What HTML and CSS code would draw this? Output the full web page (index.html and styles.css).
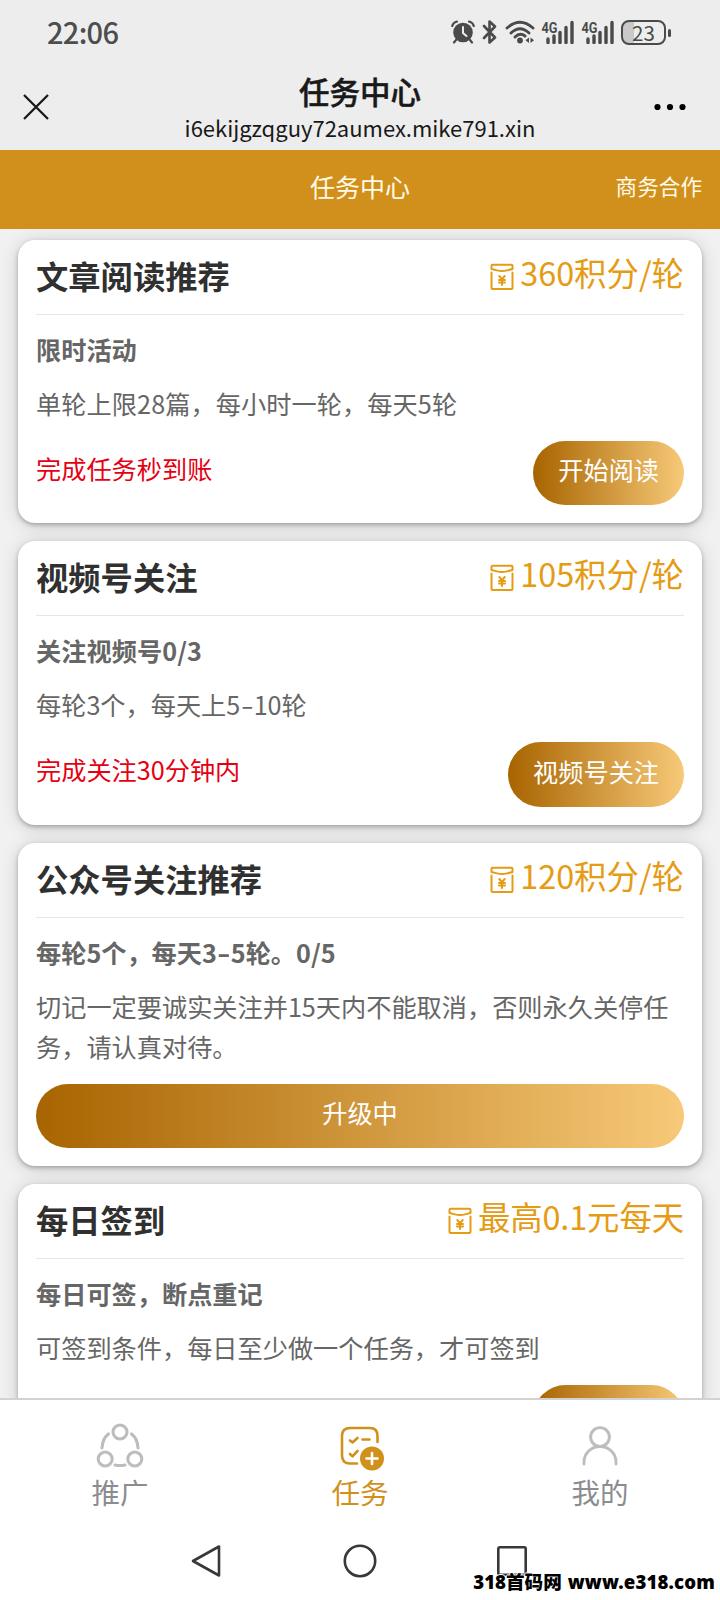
FILE: index.html
```html
<!DOCTYPE html>
<html lang="zh-CN">
<head>
<meta charset="utf-8">
<title>任务中心</title>
<link rel="stylesheet" href="styles.css">
</head>
<body>
<svg class="defs" aria-hidden="true">
  <symbol id="packet" viewBox="0 0 24 28">
    <g fill="none" stroke="currentColor" stroke-width="2" stroke-linejoin="round" stroke-linecap="round">
      <path d="M2.500 1.800H21.500Q22.500 1.800 22.500 3V6L17 7.400Q12 8.600 7 7.400L1.500 6V3Q1.500 1.800 2.500 1.800Z"/>
      <path d="M1.500 9.500V25Q1.500 26 2.500 26H21.500Q22.500 26 22.500 25V9.500"/>
      <path d="M9.300 13L12 16.300L14.700 13M12 16.500V22M9 17H15M9 19.600H15"/>
    </g>
  </symbol>
  <symbol id="signal" viewBox="0 0 34 24">
    <text class="signal-text" x="0.500" y="12.500" textLength="16" lengthAdjust="spacingAndGlyphs">4G</text>
    <path d="M7 22.500V19M13 22.500V16M19 22.500V12.500M25 22.500V7.500M31 22.500V2.500" stroke="currentColor" stroke-width="3.400" stroke-linecap="round"/>
  </symbol>
</svg>
<div class="phone">
  <header class="top">
    <div class="status">
      <span class="clock">22:06</span>
      <svg class="i-alarm" viewBox="0 0 24 24"><circle cx="12" cy="12.500" r="9.800" fill="currentColor"/><path d="M1.200 6Q2 2.500 6 1.500M18 1.500Q22 2.500 22.800 6M5 20L3 22.500M19 20L21 22.500" fill="none" stroke="currentColor" stroke-width="2.200" stroke-linecap="round"/><path d="M12 7V13L15.500 16" fill="none" stroke="#ededed" stroke-width="2" stroke-linecap="round"/></svg>
      <svg class="i-bt" viewBox="0 0 16 24"><path d="M2 6L13 17.500L7.500 22.500V1.500L13 6.500L2 18" fill="none" stroke="currentColor" stroke-width="2.600" stroke-linejoin="round" stroke-linecap="round"/></svg>
      <svg class="i-wifi" viewBox="0 0 30 24"><g fill="none" stroke="currentColor" stroke-width="2.900" stroke-linecap="round"><path d="M2 8Q15-3.500 28 8M6 13Q15 4.500 24 13M10 17Q15 12 20 16"/></g><circle cx="15" cy="20.500" r="2.900" fill="currentColor"/><path d="M24 17.500V23L20.500 20.200ZM25.500 17.500V23L29 20.200Z" fill="currentColor"/></svg>
      <svg class="i-signal"><use href="#signal"/></svg>
      <svg class="i-signal"><use href="#signal"/></svg>
      <div class="battery"><span>23</span></div>
    </div>
    <div class="titlebar">
      <svg class="close" viewBox="0 0 26 26"><path d="M1 1L25 25M25 1L1 25" stroke="#191919" stroke-width="2.300"/></svg>
      <div class="titles">
        <div class="title">任务中心</div>
        <div class="url">i6ekijgzqguy72aumex.mike791.xin</div>
      </div>
      <svg class="more" viewBox="0 0 32 8"><circle cx="3.500" cy="4" r="3.100"/><circle cx="16" cy="4" r="3.100"/><circle cx="28.500" cy="4" r="3.100"/></svg>
    </div>
  </header>
  <div class="banner"><span></span><span class="banner-title">任务中心</span><span class="banner-link">商务合作</span></div>
  <main class="list">
    <section class="card">
      <div class="head"><h2>文章阅读推荐</h2><div class="reward"><svg><use href="#packet"/></svg><span>360积分/轮</span></div></div>
      <h3>限时活动</h3>
      <p class="loose">单轮上限28篇，每小时一轮，每天5轮</p>
      <div class="foot"><span class="note">完成任务秒到账</span><button class="btn">开始阅读</button></div>
    </section>
    <section class="card">
      <div class="head"><h2>视频号关注</h2><div class="reward"><svg><use href="#packet"/></svg><span>105积分/轮</span></div></div>
      <h3 class="loose">关注视频号0/3</h3>
      <p>每轮3个，每天上5<i class="dash">-</i>10轮</p>
      <div class="foot"><span class="note">完成关注30分钟内</span><button class="btn">视频号关注</button></div>
    </section>
    <section class="card">
      <div class="head"><h2>公众号关注推荐</h2><div class="reward"><svg><use href="#packet"/></svg><span>120积分/轮</span></div></div>
      <h3>每轮5个，每天3<i class="dash">-</i>5轮。0/5</h3>
      <p>切记一定要诚实关注并15天内不能取消，否则永久关停任务，请认真对待。</p>
      <div class="foot"><button class="btn wide">升级中</button></div>
    </section>
    <section class="card">
      <div class="head"><h2>每日签到</h2><div class="reward tight"><svg><use href="#packet"/></svg><span>最高0.1元每天</span></div></div>
      <h3>每日可签，断点重记</h3>
      <p>可签到条件，每日至少做一个任务，才可签到</p>
      <div class="foot end"><button class="btn short"></button></div>
    </section>
  </main>
  <nav class="tabs">
    <div class="tab">
      <svg viewBox="0 0 50 50"><g fill="none" stroke="#bdbdbd" stroke-width="3.100" stroke-linecap="round"><circle cx="25" cy="10" r="7"/><circle cx="10.200" cy="37" r="7"/><circle cx="39.800" cy="37" r="7"/><path d="M13.500 12Q7.500 16.500 7 26M36.500 12Q42.500 16.500 43 26M20 43Q25 44.100 30 43"/></g></svg>
      <span>推广</span>
    </div>
    <div class="tab active">
      <svg viewBox="0 0 50 50"><g fill="none" stroke="#d1901c" stroke-width="2.600" stroke-linecap="round" stroke-linejoin="round"><path d="M22 41.500H15Q7 41.500 7 33.500V14Q7 6 15 6H35Q42.500 6 42.500 14V20"/><path d="M15 18.500L17.500 20.500L22.500 16M15 32L17.500 34.300L22.500 29M27.500 17.500H34.500"/></g><circle cx="37" cy="36.500" r="12" fill="#d1901c"/><path d="M31.500 36.500H42.500M37 31V42" stroke="#fff" stroke-width="2.600" stroke-linecap="round"/></svg>
      <span>任务</span>
    </div>
    <div class="tab">
      <svg viewBox="0 0 50 50"><g fill="none" stroke="#bdbdbd" stroke-width="2.900" stroke-linecap="round"><circle cx="25" cy="15" r="9.400"/><path d="M9 42V40A16 15.500 0 0 1 41 40V42"/></g></svg>
      <span>我的</span>
    </div>
  </nav>
  <div class="sysnav">
    <svg viewBox="0 0 34 34"><path d="M28 2.500V31.500L2 17Z"/></svg>
    <svg viewBox="0 0 34 34"><circle cx="17" cy="17" r="15.200"/></svg>
    <svg viewBox="0 0 34 34"><rect x="3.300" y="3.300" width="27.400" height="27.400" rx="1.500"/></svg>
  </div>
  <div class="watermark"><span>318首码网</span><span class="site">www.e318.com</span></div>
</div>
</body>
</html>
```
FILE: styles.css
```css
* { box-sizing: border-box; margin: 0; padding: 0; }
body { font-family: "Noto Sans CJK SC", sans-serif; background: #fff; }
.defs { display: none; }
.phone {
  position: relative;
  width: 720px; height: 1600px;
  display: flex; flex-direction: column;
  overflow: hidden; background: #fff;
}
.top { height: 150px; background: #ededed; flex: none; }
.status {
  height: 64px; padding: 0 54px 0 47px;
  display: flex; align-items: center; color: #4a4a4a;
}
.clock { font-size: 29px; letter-spacing: -0.700px; flex: 1; color: #4d4d4d; font-weight: 500; line-height: 40px; padding-bottom: 2px; }
.i-alarm { width: 24px; height: 24px; }
.i-bt { width: 16px; height: 24px; margin-left: 7px; }
.i-wifi { width: 30px; height: 24px; margin-left: 7px; }
.i-signal { width: 34px; height: 24px; margin-left: 6px; }
.signal-text { font: bold 15px "Roboto", sans-serif; fill: currentColor; }
.battery {
  position: relative; width: 45px; height: 25px; margin-left: 6px;
  border: 2px solid #4a4a4a; border-radius: 8px;
  background: linear-gradient(to right, #c9c9c9 11px, transparent 11px);
  display: flex; align-items: center; justify-content: center;
  font-size: 20.500px; line-height: 20px;
}
.battery span { margin-bottom: 1px; }
.battery::after {
  content: ""; position: absolute; right: -7px; top: 7px;
  width: 3px; height: 8px; border-radius: 2px; background: #4a4a4a;
}
.titlebar {
  height: 86px; padding: 0 34px 0 23px;
  display: grid; grid-template-columns: 100px 1fr 89px; align-items: start;
}
.close { width: 26px; height: 26px; margin-top: 30px; }
.more { width: 32px; height: 8px; margin-top: 39px; justify-self: end; }
.titles { text-align: center; white-space: nowrap; color: #191919; }
.title { font-size: 30.500px; line-height: 40px; font-weight: 500; margin-top: 7px; -webkit-text-stroke: 0.500px #191919; }
.url { font-size: 22px; line-height: 30px; margin-top: 1px; }
.banner {
  height: 79px; flex: none; padding: 0 18px; background: #d1901c; color: #fffbe8;
  display: grid; grid-template-columns: 1fr auto 1fr; align-items: center;
}
.banner-title { font-size: 25px; line-height: 38px; margin-bottom: 8px; }
.banner-link { font-size: 21.600px; line-height: 32px; justify-self: end; margin-bottom: 7px; }
.list {
  height: 1169px; flex: none; overflow: hidden; background: #f1f1f1;
  padding: 11px 18px 0; display: flex; flex-direction: column; gap: 18px;
}
.card {
  flex: none; background: #fff; border-radius: 17px; padding: 0 18px 18px;
  box-shadow: 0 2px 4px rgba(0, 0, 0, .26), 0 2px 18px rgba(0, 0, 0, .16);
}
.head {
  height: 75px; border-bottom: 1px solid #e6e6e6;
  display: flex; justify-content: space-between;
}
.head h2 { font-size: 32.300px; line-height: 48px; font-weight: 700; color: #303030; margin-top: 11px; }
.reward { display: flex; align-items: flex-start; color: #e59b14; font-size: 32.400px; line-height: 48px; margin-top: 8px; }
.reward svg { width: 24px; height: 28px; margin: 15px 6px 0 0; }
.reward.tight { letter-spacing: -0.100px; }
.card h3 { margin-top: 14px; font-size: 25.200px; line-height: 40px; font-weight: 700; color: #666; }
.card p { margin-top: 14px; font-size: 25.200px; line-height: 40px; color: #666; }
.loose { letter-spacing: 0.080px; }
.dash { display: inline-block; font-style: normal; transform: scaleX(1.450); margin: 0 2.300px; }
.foot { margin-top: 18px; display: flex; justify-content: space-between; }
.foot.end { justify-content: flex-end; }
.note { font-size: 25.200px; line-height: 40px; color: #e60012; margin-top: 7px; }
.btn {
  height: 64.400px; padding: 0 25px 8px; border: 0; border-radius: 33px;
  font-family: inherit; font-size: 25.200px; line-height: 56px; color: #fff;
  background: linear-gradient(to right, #a86400, #f7c978);
}
.btn.wide { width: 100%; }
.btn.short { width: 151px; }
.tabs {
  height: 122px; flex: none; border-top: 2px solid #d2d2d2; background: #fff;
  display: grid; grid-template-columns: repeat(3, 1fr);
}
.tab { display: flex; flex-direction: column; align-items: center; padding-top: 22px; color: #8b8b90; }
.tab svg { width: 50px; height: 50px; }
.tab span { font-size: 28.500px; line-height: 40px; }
.tab.active { color: #d1901c; }
.sysnav { flex: 1; display: flex; justify-content: center; gap: 118px; padding-top: 24px; }
.sysnav svg { width: 34px; height: 34px; fill: none; stroke: #383838; stroke-width: 2.600; stroke-linejoin: round; }
.watermark {
  position: absolute; right: 5px; bottom: 5px;
  display: flex; align-items: center; gap: 6px; white-space: nowrap;
  font-family: "Noto Sans", "Noto Sans CJK SC", sans-serif; font-weight: 900;
  font-size: 18.600px; line-height: 26px; color: #000;
  text-shadow: 1px 0 #fff, -1px 0 #fff, 0 1px #fff, 0 -1px #fff;
}
.site { letter-spacing: 0.150px; }
```
